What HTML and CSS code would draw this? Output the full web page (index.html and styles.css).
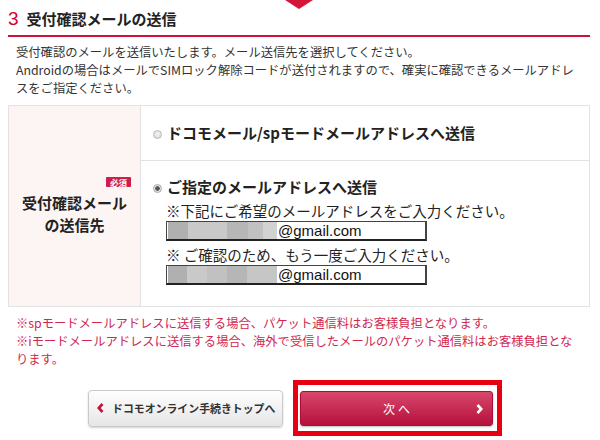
FILE: index.html
```html
<!DOCTYPE html>
<html lang="ja">
<head>
<meta charset="utf-8">
<title>受付確認メールの送信</title>
<link rel="stylesheet" href="styles.css">
</head>
<body>
<div class="page">
  <div class="arrow"></div>
  <h2 class="sec-title"><span class="num">3</span><span class="ttl">受付確認メールの送信</span></h2>
  <p class="desc">受付確認のメールを送信いたします。メール送信先を選択してください。<br>Androidの場合はメールでSIMロック解除コードが送付されますので、確実に確認できるメールアドレスをご指定ください。</p>

  <div class="form-table">
    <div class="th">
      <div class="th-inner">
        <div class="req"><span class="badge">必須</span></div>
        <div class="th-label">受付確認メール<br>の送信先</div>
      </div>
    </div>
    <div class="td td1">
      <div class="radio-line"><span class="radio"></span>ドコモメール/spモードメールアドレスへ送信</div>
    </div>
    <div class="td td2">
      <div class="radio-line"><span class="radio checked"></span>ご指定のメールアドレスへ送信</div>
      <div class="sub">
        <p class="note-in">※下記にご希望のメールアドレスをご入力ください。</p>
        <div class="mail-box">
          <span class="mask w20 g1"></span><span class="mask w39 g2"></span><span class="mask w21 g3"></span><span class="mask w15 g4"></span><span class="mask w14 g5"></span><span class="domain">@gmail.com</span>
        </div>
        <p class="note-in second">※ ご確認のため、もう一度ご入力ください。</p>
        <div class="mail-box">
          <span class="mask w19 g1"></span><span class="mask w20 g2"></span><span class="mask w20 g4"></span><span class="mask w20 g3"></span><span class="mask w30 g6"></span><span class="domain">@gmail.com</span>
        </div>
      </div>
    </div>
  </div>

  <p class="caution">※spモードメールアドレスに送信する場合、パケット通信料はお客様負担となります。<br>※iモードメールアドレスに送信する場合、海外で受信したメールのパケット通信料はお客様負担となります。</p>

  <div class="btns">
    <a class="btn-back" href="#">
      <svg class="chev" width="7" height="10" viewBox="0 0 7 10"><path d="M5.5 1 L1.8 5 L5.5 9" fill="none" stroke="#c8103c" stroke-width="2.6" stroke-linejoin="miter"/></svg>
      <span class="back-txt">ドコモオンライン手続きトップへ</span>
    </a>
    <div class="highlight">
      <a class="btn-next" href="#">
        <span></span>
        <span class="next-txt">次へ</span>
        <svg class="chev-r" width="7" height="10" viewBox="0 0 7 10"><path d="M1.5 1 L5.2 5 L1.5 9" fill="none" stroke="#ffffff" stroke-width="2.6" stroke-linejoin="miter"/></svg>
      </a>
    </div>
  </div>
</div>
</body>
</html>
```

FILE: styles.css
```css
* { box-sizing: border-box; }
html, body { margin: 0; padding: 0; background: #fff; }
body {
  width: 600px;
  height: 440px;
  overflow: hidden;
  font-family: "Noto Sans CJK JP", "Liberation Sans", sans-serif;
  color: #333;
}
.page { padding: 0 10px 0 8px; }

.arrow {
  width: 0;
  height: 0;
  margin: 0 auto;
  border-top: 9px solid #d3163a;
  border-left: 14px solid transparent;
  border-right: 14px solid transparent;
}

.sec-title {
  display: flex;
  align-items: flex-start;
  margin: 0;
  height: 28px;
  border-bottom: 2px solid #d0103a;
  line-height: 20px;
}
.num {
  font-family: "Liberation Sans", sans-serif;
  font-weight: normal;
  font-size: 19px;
  color: #d6002f;
  margin-right: 8px;
}
.ttl { font-size: 15px; font-weight: 700; color: #222; }

.desc {
  margin: 0;
  padding: 6px 6px 0 8px;
  font-size: 12.3px;
  line-height: 18px;
  color: #333;
}

.form-table {
  margin-top: 8px;
  display: grid;
  grid-template-columns: 132px 1fr;
  grid-template-rows: 55px auto;
  border: 1px solid #e2e2e2;
}
.th {
  grid-row: 1 / span 2;
  background: #fdf4f4;
  border-right: 1px solid #e2e2e2;
  display: flex;
  align-items: center;
  justify-content: center;
}
.th-inner { display: inline-block; }
.req { text-align: right; margin-right: -4px; line-height: 10px; height: 11px; }
.badge {
  display: inline-block;
  width: 25px;
  height: 10px;
  line-height: 10px;
  background: #cc1f4a;
  color: #fff;
  font-size: 8.5px;
  font-weight: 700;
  text-align: center;
  border-radius: 1px;
  vertical-align: top;
}
.th-label {
  margin-top: 4px;
  font-size: 15px;
  font-weight: 700;
  line-height: 22px;
  color: #222;
  text-align: center;
}

.td { padding-left: 12px; }
.td1 {
  display: flex;
  align-items: center;
  border-bottom: 1px solid #e2e2e2;
}
.td2 { padding-top: 16px; padding-bottom: 21px; }

.radio-line {
  display: flex;
  align-items: center;
  font-size: 15px;
  font-weight: 700;
  line-height: 20px;
  color: #222;
}
.radio {
  width: 9px;
  height: 9px;
  border-radius: 50%;
  border: 1px solid #b8b8b8;
  background: radial-gradient(circle at 50% 40%, #f4f4f4 0%, #d6d6d6 100%);
  margin-right: 5px;
  flex: none;
  position: relative;
  top: 1px;
}
.radio.checked {
  border-color: #aaa;
  background: radial-gradient(circle, #555 0 2px, #e6e6e6 2.5px, #d8d8d8 100%);
}

.sub { padding-left: 13px; }
.note-in {
  margin: 4px 0 0;
  font-size: 14.5px;
  line-height: 20px;
  color: #222;
}
.mail-box {
  width: 261px;
  height: 20px;
  border: 1px solid #444;
  border-right-width: 2px;
  border-bottom: 2px solid #222;
  display: flex;
  align-items: stretch;
  padding-left: 1px;
  background: #fff;
}
.mask { display: block; }
.w14 { width: 14px; } .w15 { width: 15px; } .w19 { width: 19px; } .w20 { width: 20px; }
.w21 { width: 21px; } .w30 { width: 30px; } .w39 { width: 39px; }
.g1 { background: #b0b0b0; }
.g2 { background: #c9c9c9; }
.g3 { background: #b6b6b6; }
.g4 { background: #c1c1c1; }
.g5 { background: #d2d2d2; }
.g6 { background: #c6c6c6; }
.domain {
  font-family: "Liberation Sans", Arial, sans-serif;
  font-size: 15px;
  line-height: 17px;
  color: #111;
  margin-left: 1px;
}

.caution {
  margin: 7px 0 0;
  padding: 0 8px 0 8px;
  font-size: 12.3px;
  line-height: 18px;
  color: #d0284f;
}

.btns {
  margin-top: 12px;
  display: flex;
  align-items: center;
  gap: 10px;
  padding-left: 80px;
}
.btn-back {
  width: 195px;
  height: 37px;
  display: flex;
  align-items: center;
  padding-left: 8px;
  border: 1px solid #c9c9c9;
  border-radius: 4px;
  background: linear-gradient(#fefefe, #e6e6e6);
  box-shadow: 0 1px 2px rgba(0,0,0,0.18);
  color: #333;
  text-decoration: none;
  font-size: 10.9px;
  font-weight: 700;
  white-space: nowrap;
}
.chev { margin-right: 8px; flex: none; }
.highlight {
  border: 5px solid #e60012;
  padding: 6px 4px 5px 2px;
}
.btn-next {
  width: 193px;
  height: 35px;
  display: grid;
  grid-template-columns: 1fr auto 1fr;
  align-items: center;
  border: 1px solid #a90d37;
  border-radius: 3px;
  background: linear-gradient(#d8476b, #b5113d);
  box-shadow: 0 1px 2px rgba(0,0,0,0.25);
  color: #fff;
  text-decoration: none;
  font-size: 12px;
  letter-spacing: 3px;
}
.next-txt { padding-left: 3px; }
.chev-r { justify-self: end; margin-right: 9px; }
```
